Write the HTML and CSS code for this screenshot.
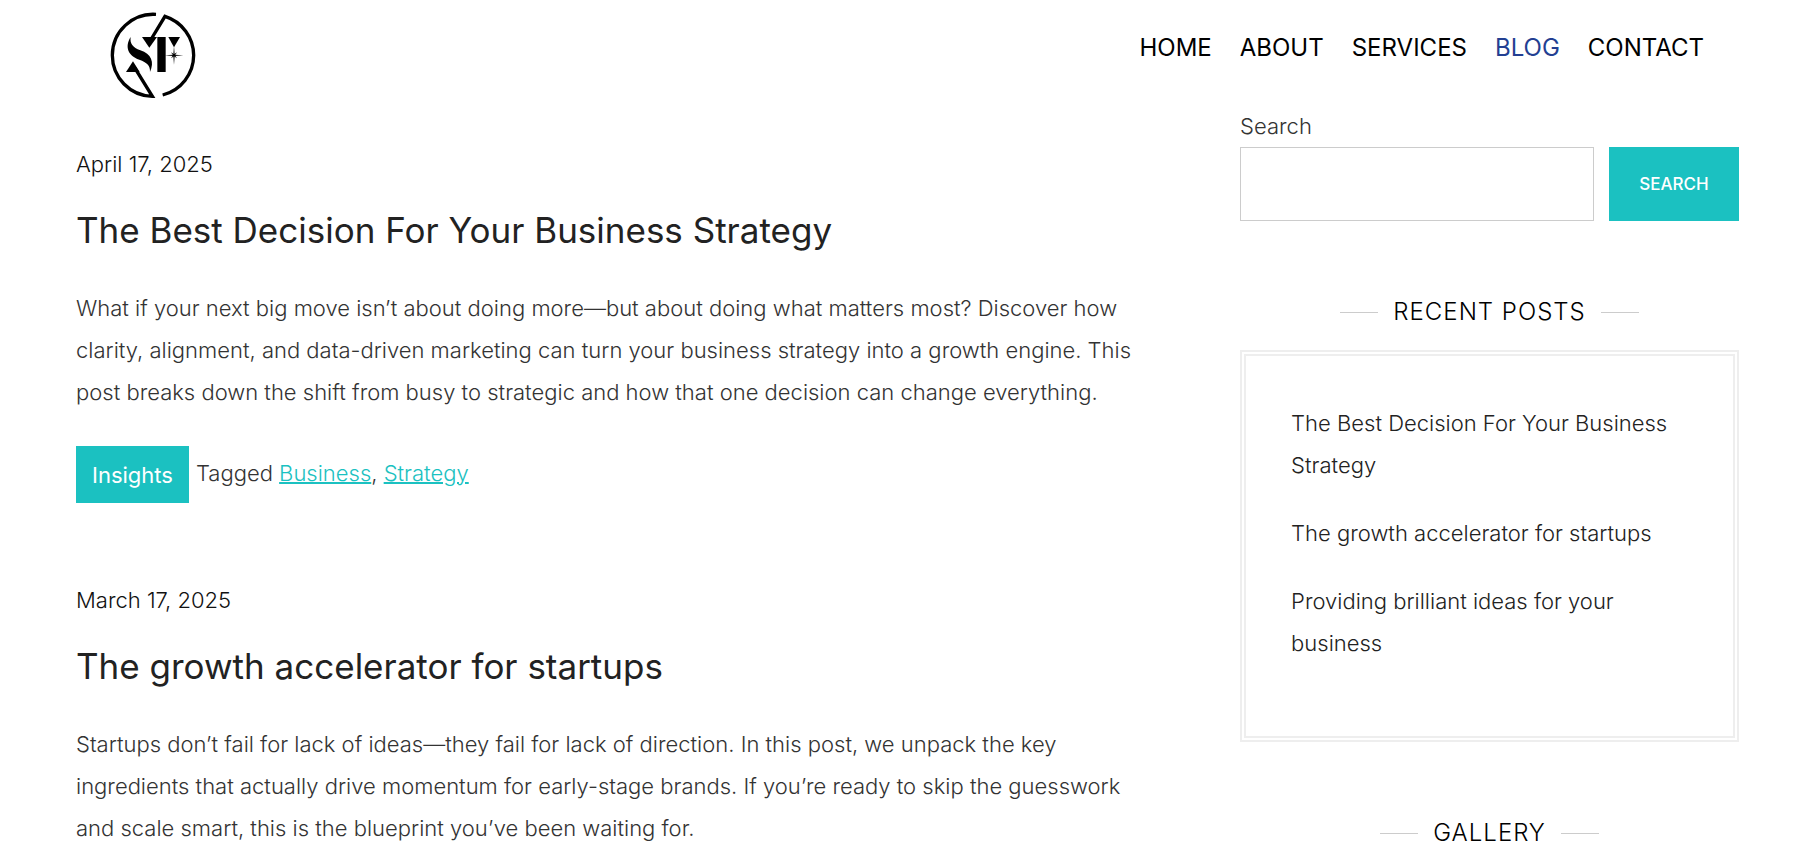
FILE: index.html
```
<!doctype html>
<html lang="en">

<head>
  <meta charset="utf-8">
  <meta name="viewport" content="width=device-width, initial-scale=1">
  <title>Blog</title>
  <link rel="stylesheet" href="styles.css">
</head>

<body>
  <header class="siteHeader">
    <a class="logo" href="#" aria-label="Home">
      <svg viewBox="60 36 258 261" width="86" height="87" aria-hidden="true">
        <!-- ring, broken at the top and the bottom -->
        <g fill="none" stroke="#000" stroke-width="10" stroke-linejoin="miter">
          <path d="M198 43A123 123 0 0 0 67 166A123 123 0 0 0 187 289L132 200" />
          <path d="M182 120L225 49A123 123 0 0 1 311 166A123 123 0 0 1 218 285" />
        </g>
        <path d="M156 111H201L178 143Z" />
        <path d="M129 184L108 216H149Z" />
        <path d="M202 111H227V216H202Z" />
        <path d="M235 111H270L252 142Z" />
        <path d="M122 111C119 131 128 142 151 151C184 162 194 186 180 216C181 195 171 188 148 179C115 168 103 141 122 111Z" />
        <!-- sparkle -->
        <path d="M252 138L254 164L280 166L254 168L252 194L250 168L224 166L250 164Z" />
        <path d="M243 157L252 163L261 157L255 166L261 175L252 169L243 175L249 166Z" />
      </svg>
    </a>
    <nav class="mainNav">
      <a href="#">HOME</a>
      <a href="#">ABOUT</a>
      <a href="#">SERVICES</a>
      <a class="active" href="#">BLOG</a>
      <a href="#">CONTACT</a>
    </nav>
  </header>

  <div class="mainBody">
    <main class="posts">
      <article class="post">
        <a class="postDate" href="#">April 17, 2025</a>
        <h2 class="postTitle"><a href="#">The Best Decision For Your Business Strategy</a></h2>
        <p class="postText">What if your next big move isn’t about doing more—but about doing what matters most? Discover how clarity, alignment, and data-driven marketing can turn your business strategy into a growth engine. This post breaks down the shift from busy to strategic and how that one decision can change everything.</p>
        <div class="postMeta">
          <a class="category" href="#">Insights</a>
          <span class="tags">Tagged <a href="#">Business</a>, <a href="#">Strategy</a></span>
        </div>
      </article>

      <article class="post">
        <a class="postDate" href="#">March 17, 2025</a>
        <h2 class="postTitle"><a href="#">The growth accelerator for startups</a></h2>
        <p class="postText">Startups don’t fail for lack of ideas—they fail for lack of direction. In this post, we unpack the key ingredients that actually drive momentum for early-stage brands. If you’re ready to skip the guesswork and scale smart, this is the blueprint you’ve been waiting for.</p>
      </article>
    </main>

    <aside class="sidebar">
      <form class="searchForm">
        <label for="search">Search</label>
        <div class="searchRow">
          <input id="search" type="search" name="s">
          <button type="submit">SEARCH</button>
        </div>
      </form>

      <section>
        <h2 class="widgetTitle">RECENT POSTS</h2>
        <ul class="recentPosts">
          <li><a href="#">The Best Decision For Your Business Strategy</a></li>
          <li><a href="#">The growth accelerator for startups</a></li>
          <li><a href="#">Providing brilliant ideas for your business</a></li>
        </ul>
      </section>

      <section>
        <h2 class="widgetTitle">GALLERY</h2>
      </section>
    </aside>
  </div>
</body>

</html>
```

FILE: styles.css
```
* {
  box-sizing: border-box;
}

body {
  margin: 0;
  background: #fff;
  color: #333;
  font-family: Inter, "Liberation Sans", sans-serif;
  font-size: 22px;
  font-weight: 300;
  line-height: 42px;
}

a {
  color: inherit;
  text-decoration: none;
}

/* HEADER */
.siteHeader {
  display: flex;
  justify-content: space-between;
  align-items: flex-start;
  padding: 12px 94px 6px 110px;
}

.logo svg {
  display: block;
}

.mainNav {
  display: flex;
  gap: 28px;
  padding-top: 15px;
  color: #000;
  font-size: 24px;
  font-weight: 400;
}

.mainNav .active {
  color: #233f92;
}

/* LAYOUT */
.mainBody {
  display: grid;
  grid-template-columns: 1fr 30%;
  column-gap: 80px;
  padding: 0 59px 0 76px;
}

/* POSTS */
.posts {
  padding-top: 38px;
}

.post + .post {
  margin-top: 76px;
}

.postDate {
  display: block;
  color: #111;
}

.postTitle {
  margin: 20px 0 32px;
  color: #222;
  font-size: 35px;
  font-weight: 400;
  line-height: 50px;
}

.postText {
  margin: 0 0 33px;
}

.post:last-child .postText {
  margin-bottom: 0;
}

.postMeta {
  display: flex;
  align-items: flex-start;
  gap: 7px;
}

.category {
  padding: 8px 16px 7px;
  background: #1bc1c1;
  color: #fff;
  font-weight: 400;
}

.tags {
  padding-top: 6px;
}

.tags a {
  color: #1bc1c1;
  text-decoration: underline;
  text-decoration-thickness: 2px;
}

/* SIDEBAR */
.searchForm label {
  display: block;
}

.searchRow {
  display: flex;
  gap: 15px;
}

.searchRow input {
  flex: 1;
  min-width: 0;
  height: 74px;
  padding: 0 20px;
  border: 1px solid #ccc;
  font: inherit;
}

.searchRow button {
  width: 130px;
  border: 0;
  background: #1bc1c1;
  color: #fff;
  font-family: inherit;
  font-size: 17px;
  font-weight: 500;
}

.widgetTitle {
  display: flex;
  justify-content: center;
  align-items: center;
  gap: 15px;
  margin: 70px 0 17px;
  color: #000;
  font-size: 24px;
  font-weight: 300;
  letter-spacing: 1px;
}

.widgetTitle::before,
.widgetTitle::after {
  content: "";
  width: 38px;
  border-top: 1px solid #ccc;
}

.recentPosts {
  margin: 0;
  padding: 46px 45px;
  border: 6px double #eee;
  list-style: none;
  color: #222;
}

.recentPosts li {
  margin-bottom: 26px;
}
```
